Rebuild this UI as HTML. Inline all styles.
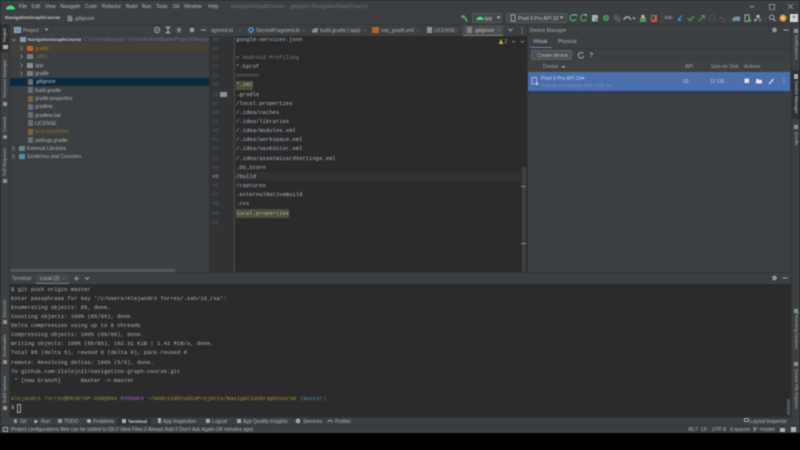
<!DOCTYPE html>
<html><head><meta charset="utf-8">
<style>
html,body{margin:0;padding:0;width:800px;height:450px;overflow:hidden;background:#000}
#w{position:absolute;left:0;top:0;width:800px;height:450px;overflow:hidden;background:#000;filter:blur(.4px);font-family:"Liberation Sans",sans-serif;font-size:5px;color:#aeb1b3}
#w div,#w svg{position:absolute}
.t{position:absolute;white-space:pre;line-height:10px;height:10px;margin-top:.6px}
.m{position:absolute;white-space:pre;line-height:10px;height:10px;margin-top:.6px;font-family:"Liberation Mono",monospace;font-size:5.54px;color:#a9b7c6}
.g{position:absolute;white-space:pre;line-height:10px;height:10px;margin-top:.6px;font-family:"Liberation Mono",monospace;font-size:5.54px;color:#565a5e;left:212px}
.v{position:absolute;white-space:pre;line-height:8px;height:8px;font-size:4.5px;color:#a4a7a9;transform-origin:0 0}
.l{transform:rotate(-90deg)}
.rr{transform:rotate(90deg)}
</style></head><body><div id="w">
<!-- base -->
<div style="left:0;top:0;width:800px;height:433px;background:#3c3f41"></div>
<div style="left:0;top:24px;width:800px;height:1px;background:#333537"></div>
<!-- menu -->
<svg style="left:5px;top:3px" width="11" height="7"><path d="M1 6.500Q1.500 2.500 5.500 2.500T10 6.500Z" fill="#3ddc84"/></svg>
<span class="t" style="left:19px;top:1px;color:#bbb">File</span>
<span class="t" style="left:31.500px;top:1px;color:#bbb">Edit</span>
<span class="t" style="left:45px;top:1px;color:#bbb">View</span>
<span class="t" style="left:60.500px;top:1px;color:#bbb">Navigate</span>
<span class="t" style="left:85px;top:1px;color:#bbb">Code</span>
<span class="t" style="left:102px;top:1px;color:#bbb">Refactor</span>
<span class="t" style="left:126px;top:1px;color:#bbb">Build</span>
<span class="t" style="left:142px;top:1px;color:#bbb">Run</span>
<span class="t" style="left:156px;top:1px;color:#bbb">Tools</span>
<span class="t" style="left:173px;top:1px;color:#bbb">Git</span>
<span class="t" style="left:184px;top:1px;color:#bbb">Window</span>
<span class="t" style="left:208px;top:1px;color:#bbb">Help</span>
<span class="t" style="left:231px;top:1px;color:#6f7274">NavigationGraphCourse - .gitignore [NavigationGraphCourse]</span>
<!-- window controls -->
<div style="left:750px;top:6px;width:4px;height:1px;background:#9a9c9e"></div>
<div style="left:769px;top:4px;width:4px;height:4px;border:1px solid #8a8c8e;box-sizing:content-box"></div>
<svg style="left:787px;top:3px" width="7" height="7"><path d="M1 1L6 6M6 1L1 6" stroke="#9a9c9e" stroke-width=".8"/></svg>
<!-- breadcrumb -->
<span class="t" style="left:5px;top:13px;color:#c4c6c8;font-weight:bold;font-size:4.800px">NavigationGraphCourse</span>
<svg style="left:67px;top:15px" width="6" height="7"><path d="M.5.500H4L5.500 2V6.500H.5Z" fill="#7d8083"/></svg>
<span class="t" style="left:74px;top:13px;color:#aeb1b3">.gitignore</span>
<!-- toolbar -->
<svg style="left:460px;top:14px" width="9" height="9"><path d="M1 2L4 1L8 7L6.500 8L4 4L2 4Z" fill="#59a869"/></svg>
<div style="left:472px;top:13px;width:30px;height:10px;background:#45484a;border:.5px solid #55585a;border-radius:1.500px;box-sizing:border-box"></div>
<svg style="left:476px;top:15px" width="8" height="6"><path d="M.5 5Q1 1.500 4 1.500T7.500 5Z" fill="#3ddc84"/></svg>
<span class="t" style="left:484px;top:13px;color:#c0c2c4">app</span>
<svg style="left:496px;top:16px" width="5" height="4"><path d="M.5.500H4.500L2.500 3Z" fill="#b0b2b4"/></svg>
<div style="left:506px;top:13px;width:61px;height:10px;background:#45484a;border:.5px solid #55585a;border-radius:1.500px;box-sizing:border-box"></div>
<svg style="left:510px;top:14px" width="6" height="8"><rect x="1" y=".8" width="4" height="6.400" rx=".6" fill="none" stroke="#b0b2b4" stroke-width=".8"/></svg>
<span class="t" style="left:518px;top:13px;color:#c0c2c4">Pixel 6 Pro API 33</span>
<svg style="left:559px;top:16px" width="5" height="4"><path d="M.5.500H4.500L2.500 3Z" fill="#b0b2b4"/></svg>
<svg style="left:568px;top:13px" width="200" height="11">
<path d="M7 2.500A3 3 0 1 0 7.800 6" fill="none" stroke="#59a869" stroke-width="1.200"/><path d="M5 1H9V4Z" fill="#59a869"/>
<path d="M17.500 2.500A3 3 0 1 0 18.300 6" fill="none" stroke="#59a869" stroke-width="1"/><path d="M15.500 1H19V4Z" fill="#8fa58f"/>
<rect x="24" y="2" width="6" height="6.500" fill="#afb1b3"/><rect x="27" y="5" width="3" height="3.500" fill="#59a869"/>
<circle cx="38" cy="5" r="3" fill="#499c54"/><circle cx="38" cy="5" r="1.200" fill="#2f6a38"/>
<rect x="46" y="2" width="4" height="5" fill="#55585a"/><rect x="48.500" y="4" width="4" height="5" fill="#55585a"/>
<path d="M56 7A3.200 3.200 0 0 1 62.500 7" fill="none" stroke="#afb1b3" stroke-width="1.300"/><path d="M58 6L60 4" stroke="#59a869" stroke-width=".8"/>
<path d="M64 4.500H68L66 6.500Z" fill="#afb1b3"/>
<path d="M72 4.500H78V9H72Z" fill="#499c54"/><circle cx="75" cy="3.500" r="1.800" fill="#afb1b3"/>
<rect x="83" y="2" width="6" height="7" fill="#c75450"/><rect x="84.200" y="3" width="2" height="4" fill="#3c3f41"/>
<rect x="94" y="0" width=".5" height="10" fill="#515456"/>
<path d="M110 7L114 2.500" stroke="#4a88c7" stroke-width="1.300"/><rect x="110" y="6" width="3" height="2" fill="#4a88c7"/>
<path d="M120 5.500L122 7.500L126 3" stroke="#499c54" stroke-width="1.300" fill="none"/>
<path d="M131 8L136 3M133 2.500H136.500V6" stroke="#499c54" stroke-width="1.100" fill="none"/>
<circle cx="144" cy="5" r="3" fill="none" stroke="#555" stroke-width=".8"/>
<path d="M152 5H156.500A2 2 0 0 1 156.500 8.500H154M152 5L153.500 3.500M152 5L153.500 6.500" stroke="#5c5f61" stroke-width=".7" fill="none"/>
<rect x="162" y="0" width=".5" height="10" fill="#515456"/>
<path d="M164 8Q164 4 168 3.500H172V8Z" fill="#87939a"/><path d="M164 7H172" stroke="#3592c4" stroke-width="1"/>
<rect x="177" y="1.800" width="4" height="6.500" fill="none" stroke="#afb1b3" stroke-width=".9"/><rect x="180" y="6" width="3" height="2.500" fill="#59a869"/>
<circle cx="190" cy="3.500" r="1.800" fill="#afb1b3"/><circle cx="187.500" cy="7" r="1.400" fill="#a0a2a4"/><circle cx="192" cy="7" r="1.400" fill="#4a88c7"/>
<rect x="197" y="0" width=".5" height="10" fill="#515456"/>
</svg>
<span class="t" style="left:664.500px;top:13px;color:#a0a2a4;font-weight:bold;font-size:4.800px">Git:</span>
<svg style="left:768px;top:13px" width="32" height="11">
<circle cx="3.800" cy="4.200" r="2.200" fill="none" stroke="#afb1b3" stroke-width=".9"/><path d="M5.500 6L7.500 8" stroke="#afb1b3" stroke-width="1"/>
<circle cx="15" cy="5" r="3.500" fill="#dd9a32"/><circle cx="15" cy="5" r="1.300" fill="#f4d9a0"/>
<rect x="22" y="1" width="8" height="8" fill="#d5d6d8"/><circle cx="26" cy="4" r="1.500" fill="#8b8d90"/>
</svg>
<!-- Left stripe -->
<div style="left:0;top:24px;width:9px;height:28px;background:#2f3133"></div>
<div style="left:9px;top:25px;width:.5px;height:392px;background:#323436"></div>
<span class="v l" style="left:1px;top:42px;color:#c4c6c8">Project</span>
<div style="left:2.500px;top:45px;width:5px;height:4px;background:#a9abad"></div>
<span class="v l" style="left:1px;top:98px">Resource Manager</span>
<div style="left:3px;top:101.500px;width:4px;height:4px;background:#8f9193"></div>
<span class="v l" style="left:1px;top:132px">Commit</span>
<div style="left:3px;top:134.500px;width:4px;height:4px;background:#8f9193;border-radius:50%"></div>
<span class="v l" style="left:1px;top:176px">Pull Requests</span>
<div style="left:3px;top:179px;width:4px;height:4px;background:#8f9193"></div>
<span class="v l" style="left:1px;top:318px">Structure</span>
<div style="left:3px;top:320px;width:4px;height:4px;background:#8f9193"></div>
<span class="v l" style="left:1px;top:357px">Bookmarks</span>
<div style="left:3px;top:359.500px;width:4px;height:4px;background:#8f9193"></div>
<span class="v l" style="left:1px;top:403px">Build Variants</span>
<div style="left:3px;top:405.500px;width:4px;height:4px;background:#8f9193"></div>
<!-- Project header -->
<div style="left:14px;top:27px;width:7px;height:6px;background:#6a8eb5;border:.5px solid #9aa;box-sizing:border-box"></div>
<span class="t" style="left:23px;top:25px;color:#a8aaac">Project</span>
<svg style="left:44px;top:28px" width="5" height="4"><path d="M.5.500H4.500L2.500 3Z" fill="#9a9c9e"/></svg>
<svg style="left:153px;top:26px" width="56" height="8">
<circle cx="4" cy="4" r="2.800" fill="none" stroke="#afb1b3" stroke-width=".8"/><path d="M2.800 2.800L5.200 5.200M5.200 2.800L2.800 5.200" stroke="#afb1b3" stroke-width=".6"/>
<path d="M12.500 1H17.500M12.500 7H17.500M15 1.500V6.500M13.500 2.800L15 1.500L16.500 2.800M13.500 5.200L15 6.500L16.500 5.200" stroke="#afb1b3" stroke-width=".7" fill="none"/>
<path d="M23.500 4H28.500M24.500 1.500L26 3L27.500 1.500M24.500 6.500L26 5L27.500 6.500" stroke="#afb1b3" stroke-width=".7" fill="none"/>
<circle cx="39" cy="4" r="2.200" fill="#afb1b3"/><circle cx="39" cy="4" r=".8" fill="#3c3f41"/>
<path d="M48 4H53" stroke="#afb1b3" stroke-width=".9"/>
</svg>
<!-- Tree -->
<svg style="left:12px;top:37.500px" width="4" height="5"><path d="M.3 1L2 3L3.700 1" stroke="#8f9193" stroke-width=".7" fill="none"/></svg>
<div style="left:20px;top:37px;width:6px;height:5px;background:#8a9bb0"></div>
<span class="t" style="left:27.500px;top:34.700px;color:#c0c2c4;font-weight:bold;font-size:4.700px">NavigationGraphCourse</span>
<div style="left:84px;top:34px;width:125px;height:11px;overflow:hidden"><span class="t" style="left:0;top:.7px;color:#6c6f72;font-size:5px">C:\Users\Alejandro Torres\AndroidStudioProjects\Navigation</span></div>
<div style="left:10px;top:44px;width:199px;height:8.300px;background:#453f35"></div>
<div style="left:10px;top:77.500px;width:199px;height:8.400px;background:#0d293e"></div>
<svg style="left:19.500px;top:45.500px" width="3" height="5"><path d="M.5.500L2.300 2.500L.5 4.500" stroke="#8f9193" stroke-width=".7" fill="none"/></svg>
<svg style="left:19.500px;top:54px" width="3" height="5"><path d="M.5.500L2.300 2.500L.5 4.500" stroke="#8f9193" stroke-width=".7" fill="none"/></svg>
<svg style="left:19.500px;top:62.500px" width="3" height="5"><path d="M.5.500L2.300 2.500L.5 4.500" stroke="#8f9193" stroke-width=".7" fill="none"/></svg>
<svg style="left:19.500px;top:70.500px" width="3" height="5"><path d="M.5.500L2.300 2.500L.5 4.500" stroke="#8f9193" stroke-width=".7" fill="none"/></svg>
<div style="left:27px;top:45.500px;width:6px;height:5px;background:#c4622d"></div>
<div style="left:27px;top:54px;width:6px;height:5px;background:#7d8083"></div>
<div style="left:27px;top:62.500px;width:6px;height:5px;background:#8d9093"></div>
<div style="left:27px;top:70.500px;width:6px;height:5px;background:#7d8083"></div>
<span class="t" style="left:35px;top:43.300px;color:#a7762e">gradle</span>
<span class="t" style="left:36px;top:51.700px;color:#80702f">.idea</span>
<span class="t" style="left:35px;top:60px;color:#aeb1b3">app</span>
<span class="t" style="left:35px;top:68px;color:#aeb1b3">gradle</span>
<div style="left:28px;top:78.500px;width:4.500px;height:6px;background:#6a6d70"></div>
<div style="left:28px;top:87px;width:4.500px;height:6px;background:#6a6d70"></div>
<div style="left:28px;top:95.500px;width:4.500px;height:6px;background:#7d6540"></div>
<div style="left:28px;top:103.500px;width:4.500px;height:6px;background:#646e85"></div>
<div style="left:28px;top:112px;width:4.500px;height:6px;background:#6a6d70"></div>
<div style="left:28px;top:120px;width:4.500px;height:6px;background:#6a6d70"></div>
<div style="left:28px;top:128.500px;width:4.500px;height:6px;background:#7d6540"></div>
<div style="left:28px;top:137px;width:4.500px;height:6px;background:#6a6d70"></div>
<span class="t" style="left:35px;top:76.700px;color:#b4c0c8">.gitignore</span>
<span class="t" style="left:35px;top:85px">build.gradle</span>
<span class="t" style="left:35px;top:93.300px">gradle.properties</span>
<span class="t" style="left:35px;top:101.700px">gradlew</span>
<span class="t" style="left:35px;top:110px">gradlew.bat</span>
<span class="t" style="left:35px;top:118px">LICENSE</span>
<span class="t" style="left:35px;top:126.700px;color:#80702f">local.properties</span>
<span class="t" style="left:35px;top:135px">settings.gradle</span>
<svg style="left:12px;top:145.500px" width="3" height="5"><path d="M.5.500L2.300 2.500L.5 4.500" stroke="#8f9193" stroke-width=".7" fill="none"/></svg>
<svg style="left:12px;top:153.500px" width="3" height="5"><path d="M.5.500L2.300 2.500L.5 4.500" stroke="#8f9193" stroke-width=".7" fill="none"/></svg>
<div style="left:19px;top:145.500px;width:6px;height:5.500px;background:#5f8a8a"></div>
<div style="left:19px;top:153.500px;width:6px;height:5.500px;background:#5b8fa8"></div>
<span class="t" style="left:27px;top:143.300px">External Libraries</span>
<span class="t" style="left:27px;top:151.300px">Scratches and Consoles</span>
<div style="left:10px;top:269px;width:165px;height:3px;background:#54585a"></div>
<!-- Tabs -->
<div style="left:209px;top:25px;width:318px;height:11px;background:#3c3f41"></div>
<div style="left:463px;top:25px;width:40px;height:11px;background:#4b4e50"></div>
<div style="left:463px;top:34.500px;width:40px;height:1.200px;background:#777a7c"></div>
<span class="t" style="left:211px;top:25px">agment.kt</span>
<span class="t" style="left:238.500px;top:25px;color:#6a6d70">×</span>
<svg style="left:247px;top:26px" width="8" height="8"><circle cx="4" cy="4" r="3" fill="#4a88c7"/><circle cx="4" cy="4" r="1.200" fill="#3c3f41"/></svg>
<span class="t" style="left:256px;top:25px">SecondFragment.kt</span>
<span class="t" style="left:302px;top:25px;color:#6a6d70">×</span>
<svg style="left:311px;top:27px" width="8" height="6"><path d="M.5 5.500Q1 1.500 5 1L7.500 1.500L6.500 3V5.500Z" fill="#87939a"/></svg>
<span class="t" style="left:320px;top:25px">build.gradle (:app)</span>
<span class="t" style="left:363px;top:25px;color:#6a6d70">×</span>
<div style="left:372px;top:27px;width:7px;height:6px;background:#b8622e"></div>
<span class="t" style="left:381px;top:25px">nav_graph.xml</span>
<span class="t" style="left:416.500px;top:25px;color:#6a6d70">×</span>
<div style="left:427px;top:27px;width:4.500px;height:6px;background:#8d9093"></div>
<span class="t" style="left:434px;top:25px">LICENSE</span>
<span class="t" style="left:455px;top:25px;color:#6a6d70">×</span>
<div style="left:467px;top:27px;width:4.500px;height:6px;background:#7d8083"></div>
<span class="t" style="left:474px;top:25px;color:#c0c2c4">.gitignore</span>
<span class="t" style="left:497.500px;top:25px;color:#6a6d70">×</span>
<svg style="left:508px;top:28px" width="5" height="4"><path d="M.5.500L2.500 3L4.500.500" stroke="#afb1b3" stroke-width=".8" fill="none"/></svg>
<svg style="left:521px;top:27px" width="2" height="7"><path d="M1 .5V1.500M1 3V4M1 5.500V6.500" stroke="#afb1b3" stroke-width=".9"/></svg>
<!-- Gutter/editor -->
<div style="left:209px;top:36px;width:25px;height:236px;background:#313335"></div>
<div style="left:234px;top:36px;width:293px;height:236px;background:#2b2b2b"></div>
<div style="left:234px;top:171.500px;width:287px;height:9.200px;background:#323232"></div>
<div style="left:234px;top:36px;width:.5px;height:236px;background:#484a4c"></div>
<div style="left:236px;top:80.800px;width:17px;height:9.200px;background:#4f4d38"></div>
<div style="left:236px;top:208.500px;width:53px;height:9.200px;background:#4f4d38"></div>
<span class="g" style="top:34px">30</span><span class="g" style="top:43.200px">31</span><span class="g" style="top:52.300px">32</span><span class="g" style="top:61.500px">33</span><span class="g" style="top:70.600px">34</span><span class="g" style="top:79.800px">35</span><span class="g" style="top:89px">36</span><span class="g" style="top:98.100px">37</span><span class="g" style="top:107.300px">38</span><span class="g" style="top:116.400px">39</span><span class="g" style="top:125.600px">40</span><span class="g" style="top:134.800px">41</span><span class="g" style="top:143.900px">42</span><span class="g" style="top:153.100px">43</span><span class="g" style="top:162.200px">44</span><span class="g" style="top:171.400px;color:#a4a3a3">45</span><span class="g" style="top:180.600px">46</span><span class="g" style="top:189.700px">47</span><span class="g" style="top:198.900px">48</span><span class="g" style="top:208px">49</span><span class="g" style="top:217.200px">50</span>
<div style="left:220px;top:91.500px;width:7px;height:5.500px;background:#8d9093"></div>
<span class="m" style="left:236px;top:34px">google-services.json</span>
<span class="m" style="left:236px;top:52.300px;color:#808080"># Android Profiling</span>
<span class="m" style="left:236px;top:61.500px">*.hprof</span>
<span class="m" style="left:236px;top:70.600px;color:#808080">=======</span>
<span class="m" style="left:236px;top:79.800px">*.iml</span>
<span class="m" style="left:236px;top:89px">.gradle</span>
<span class="m" style="left:236px;top:98.100px">/local.properties</span>
<span class="m" style="left:236px;top:107.300px">/.idea/caches</span>
<span class="m" style="left:236px;top:116.400px">/.idea/libraries</span>
<span class="m" style="left:236px;top:125.600px">/.idea/modules.xml</span>
<span class="m" style="left:236px;top:134.800px">/.idea/workspace.xml</span>
<span class="m" style="left:236px;top:143.900px">/.idea/navEditor.xml</span>
<span class="m" style="left:236px;top:153.100px">/.idea/assetWizardSettings.xml</span>
<span class="m" style="left:236px;top:162.200px">.DS_Store</span>
<span class="m" style="left:236px;top:171.400px">/build</span>
<span class="m" style="left:236px;top:180.600px">/captures</span>
<span class="m" style="left:236px;top:189.700px">.externalNativeBuild</span>
<span class="m" style="left:236px;top:198.900px">.cxx</span>
<span class="m" style="left:236px;top:208px">local.properties</span>
<svg style="left:498px;top:38px" width="28" height="7"><path d="M.5 6L3 1L5.500 6Z" fill="#c9a13b"/><path d="M14 4.500L15.500 3L17 4.500M23 3L24.500 4.500L26 3" stroke="#9a9c9e" stroke-width=".7" fill="none"/></svg>
<span class="t" style="left:504.500px;top:36px">2</span>
<div style="left:521.500px;top:167px;width:4px;height:105px;background:#3e4042"></div>
<div style="left:521px;top:185.700px;width:5px;height:1px;background:#a0864a"></div>
<div style="left:521px;top:243px;width:5px;height:1px;background:#a0864a"></div>
<!-- Device manager -->
<div style="left:527px;top:25px;width:.8px;height:247px;background:#323436"></div>
<span class="t" style="left:530px;top:25px;color:#a8aaac">Device Manager</span>
<svg style="left:770px;top:26px" width="20" height="8"><circle cx="4.500" cy="4" r="2.200" fill="#afb1b3"/><circle cx="4.500" cy="4" r=".8" fill="#3c3f41"/><path d="M13.500 4H18.500" stroke="#afb1b3" stroke-width=".9"/></svg>
<span class="t" style="left:533px;top:36.500px;color:#c0c2c4">Virtual</span>
<span class="t" style="left:558px;top:36.500px">Physical</span>
<div style="left:530px;top:47px;width:22px;height:1.300px;background:#4a88c7"></div>
<div style="left:527.800px;top:48.300px;width:262px;height:.5px;background:#333537"></div>
<div style="left:531px;top:50px;width:41px;height:10px;background:#4c5052;border:.5px solid #5e6163;border-radius:1.500px;box-sizing:border-box"></div>
<span class="t" style="left:537px;top:50px;color:#b8babc">Create device</span>
<svg style="left:577px;top:51px" width="8" height="8"><path d="M6.300 2.500A2.800 2.800 0 1 0 6.800 5" fill="none" stroke="#afb1b3" stroke-width=".9"/></svg>
<span class="t" style="left:589.500px;top:50px;color:#afb1b3;font-weight:bold;font-size:6px">?</span>
<div style="left:528px;top:61px;width:262px;height:11px;background:#3e4143"></div>
<span class="t" style="left:543px;top:61.500px;color:#a0a2a4">Device</span>
<svg style="left:561px;top:65px" width="5" height="3"><path d="M.5 2.500L2.500.5L4.500 2.500Z" fill="#afb1b3"/></svg>
<span class="t" style="left:685px;top:61.500px;color:#a0a2a4">API</span>
<span class="t" style="left:711px;top:61.500px;color:#a0a2a4">Size on Disk</span>
<span class="t" style="left:744px;top:61.500px;color:#a0a2a4">Actions</span>
<div style="left:528px;top:72px;width:262px;height:19px;background:#4b6eaf"></div>
<svg style="left:531px;top:77px" width="8" height="9"><rect x="1" y=".5" width="4.500" height="6.500" rx=".7" fill="none" stroke="#c5cfe0" stroke-width=".8"/><circle cx="6" cy="7" r="1.200" fill="#c5cfe0"/></svg>
<span class="t" style="left:541px;top:73.500px;color:#c7d2e6">Pixel 6 Pro API 33</span>
<svg style="left:581px;top:77px" width="4" height="3"><path d="M.2.200H3.800L2 2.500Z" fill="#c7d2e6"/></svg>
<span class="t" style="left:541px;top:80px;color:#7d97c6;font-size:4.500px">Android 13.0 Google APIs | x86_64</span>
<span class="t" style="left:683px;top:76px;color:#b9c7e0">33</span>
<span class="t" style="left:710px;top:76px;color:#b9c7e0">12 GB</span>
<svg style="left:743px;top:76px" width="46" height="10"><rect x="1.500" y="2.500" width="4.500" height="4.500" fill="#dfe4ee"/><path d="M13 3H15.500L16.500 4H19V7.500H13Z" fill="#dfe4ee"/><path d="M26 8L30.500 3" stroke="#dfe4ee" stroke-width="1.300"/><path d="M41 2V2.800M41 4.500V5.300M41 7V7.800" stroke="#dfe4ee" stroke-width=".9"/></svg>
<!-- Right stripe -->
<div style="left:790.500px;top:25px;width:.5px;height:392px;background:#323436"></div>
<div style="left:791px;top:70px;width:9px;height:49px;background:#2f3133"></div>
<div style="left:793.500px;top:29px;width:4px;height:4px;background:#8f9193"></div>
<span class="v rr" style="left:799.500px;top:35px">Notifications</span>
<div style="left:793.500px;top:74px;width:4px;height:5px;background:#a9abad"></div>
<span class="v rr" style="left:799.500px;top:81px;color:#c4c6c8">Device Manager</span>
<div style="left:793.500px;top:125px;width:4px;height:4px;background:#8f9193"></div>
<span class="v rr" style="left:799.500px;top:132px">Gradle</span>
<div style="left:793.500px;top:309px;width:4px;height:4px;background:#8f9193"></div>
<div style="left:796px;top:311.500px;width:2.500px;height:2.500px;background:#499c54;border-radius:50%"></div>
<span class="v rr" style="left:799.500px;top:315px">Running Devices</span>
<div style="left:793.500px;top:362px;width:4px;height:4px;background:#8f9193"></div>
<span class="v rr" style="left:799.500px;top:369px">Device File Explorer</span>
<!-- Terminal -->
<div style="left:9.500px;top:272px;width:781px;height:12px;background:#3c3f41;border-top:.5px solid #323436;box-sizing:border-box"></div>
<div style="left:36px;top:274px;width:33px;height:10px;background:#44474a"></div>
<div style="left:36px;top:283px;width:33px;height:1px;background:#777a7c"></div>
<span class="t" style="left:12px;top:273.700px;color:#a8aaac">Terminal:</span>
<span class="t" style="left:40px;top:273.700px;color:#b8babc">Local (2)</span>
<span class="t" style="left:62px;top:273.700px;color:#6a6d70">×</span>
<svg style="left:73px;top:275px" width="18" height="7"><path d="M3.500 1V6M1 3.500H6" stroke="#b0b2b4" stroke-width=".8"/><path d="M12 2L14 4.500L16 2" stroke="#b0b2b4" stroke-width=".8" fill="none"/></svg>
<svg style="left:770px;top:274px" width="20" height="8"><circle cx="4.500" cy="4" r="2.200" fill="#afb1b3"/><circle cx="4.500" cy="4" r=".8" fill="#3c3f41"/><path d="M12.500 4H17.500" stroke="#afb1b3" stroke-width=".9"/></svg>
<div style="left:9.500px;top:284px;width:781px;height:133px;background:#2b2b2b"></div>
<div style="left:787px;top:399px;width:3px;height:16px;background:#505355"></div>
<span class="m" style="left:11px;top:284px;color:#b0b2b4">$ git push origin master</span>
<span class="m" style="left:11px;top:293px;color:#b0b2b4">Enter passphrase for key '/c/Users/Alejandro Torres/.ssh/id_rsa':</span>
<span class="m" style="left:11px;top:302.300px;color:#b0b2b4">Enumerating objects: 85, done.</span>
<span class="m" style="left:11px;top:311.300px;color:#b0b2b4">Counting objects: 100% (85/85), done.</span>
<span class="m" style="left:11px;top:320.300px;color:#b0b2b4">Delta compression using up to 8 threads</span>
<span class="m" style="left:11px;top:329.700px;color:#b0b2b4">Compressing objects: 100% (66/66), done.</span>
<span class="m" style="left:11px;top:338.700px;color:#b0b2b4">Writing objects: 100% (85/85), 102.31 KiB | 1.42 MiB/s, done.</span>
<span class="m" style="left:11px;top:347.700px;color:#b0b2b4">Total 85 (delta 5), reused 0 (delta 0), pack-reused 0</span>
<span class="m" style="left:11px;top:357.300px;color:#b0b2b4">remote: Resolving deltas: 100% (5/5), done.</span>
<span class="m" style="left:11px;top:366.300px;color:#b0b2b4">To github.com:IIalejoII/navigation-graph-course.git</span>
<span class="m" style="left:11px;top:375.300px;color:#b0b2b4"> * [new branch]      master -&gt; master</span>
<span class="m" style="left:11px;top:393.700px;color:#b0b2b4"><span style="color:#7f9a3a">Alejandro Torres@DESKTOP-D9BQKN3</span> <span style="color:#a35fc0">MINGW64</span> <span style="color:#b4962f">~/AndroidStudioProjects/NavigationGraphCourse</span> <span style="color:#3f9aa8">(master)</span></span>
<span class="m" style="left:11px;top:402.700px;color:#b0b2b4">$</span>
<div style="left:17px;top:404px;width:3.500px;height:9px;border:.5px solid #a0a2a4;box-sizing:border-box"></div>
<!-- Tool bar -->
<div style="left:0;top:417px;width:800px;height:8px;background:#3c3f41;border-top:.5px solid #323436;box-sizing:border-box"></div>
<div style="left:117px;top:417px;width:34px;height:8px;background:#2f3133"></div>
<span class="t" style="left:20px;top:416px">Git</span>
<div style="left:13.500px;top:419px;width:3.500px;height:4px;background:#8f9193"></div>
<span class="t" style="left:41px;top:416px">Run</span>
<svg style="left:34px;top:418.500px" width="5" height="5"><path d="M.5.500L4.500 2.500L.5 4.500Z" fill="#b0b2b4"/></svg>
<span class="t" style="left:64px;top:416px">TODO</span>
<div style="left:58px;top:419px;width:4px;height:4px;background:#8f9193"></div>
<span class="t" style="left:93px;top:416px">Problems</span>
<div style="left:86.500px;top:418.500px;width:4.500px;height:4.500px;background:#afb1b3;border-radius:50%"></div>
<span class="t" style="left:128px;top:416px;color:#d0d2d4;font-weight:bold;font-size:4.700px">Terminal</span>
<div style="left:121.500px;top:418.500px;width:4.500px;height:4.500px;background:#afb1b3"></div>
<span class="t" style="left:163px;top:416px">App Inspection</span>
<div style="left:157.500px;top:418px;width:3.500px;height:5px;background:#a5a7a9"></div>
<span class="t" style="left:212px;top:416px">Logcat</span>
<div style="left:205.500px;top:419px;width:4px;height:3.500px;background:#a5a7a9"></div>
<span class="t" style="left:243px;top:416px">App Quality Insights</span>
<div style="left:236.500px;top:418.500px;width:4px;height:4.500px;background:#a5a7a9"></div>
<svg style="left:295px;top:417.500px" width="6" height="6"><circle cx="3" cy="3" r="2.200" fill="#c4c6c8"/><circle cx="3" cy="3" r=".8" fill="#3c3f41"/></svg>
<span class="t" style="left:303px;top:416px">Services</span>
<svg style="left:327px;top:418px" width="6" height="5"><path d="M.8 4.500A2.200 2.200 0 0 1 5.200 4.500" fill="none" stroke="#afb1b3" stroke-width=".9"/></svg>
<span class="t" style="left:335px;top:416px">Profiler</span>
<div style="left:743.500px;top:418px;width:5px;height:4px;border:.5px solid #a5a7a9;box-sizing:border-box"></div>
<span class="t" style="left:750px;top:416px">Layout Inspector</span>
<!-- Status bar -->
<div style="left:0;top:425px;width:800px;height:8px;background:#3c3f41;border-top:.5px solid #323436;box-sizing:border-box"></div>
<div style="left:3px;top:426.500px;width:4.500px;height:5px;border:.6px solid #a5a7a9;box-sizing:border-box"></div>
<span class="t" style="left:11px;top:424px">Project configurations files can be added to Git // View Files // Always Add // Don't Ask Again (36 minutes ago)</span>
<span class="t" style="left:688px;top:424px">45:7</span>
<span class="t" style="left:701.500px;top:424px">LF</span>
<span class="t" style="left:712px;top:424px">UTF-8</span>
<span class="t" style="left:730px;top:424px">4 spaces</span>
<svg style="left:753px;top:426px" width="5" height="6"><path d="M1.200.5V5.500M1.200 3.500Q3.800 3.500 3.800 1.500" stroke="#afb1b3" stroke-width=".8" fill="none"/></svg>
<span class="t" style="left:760px;top:424px">master</span>
<div style="left:780px;top:428px;width:5px;height:3.500px;background:#afb1b3"></div>
<div style="left:790.500px;top:426.500px;width:5px;height:5px;background:#afb1b3"></div>
</div></body></html>
